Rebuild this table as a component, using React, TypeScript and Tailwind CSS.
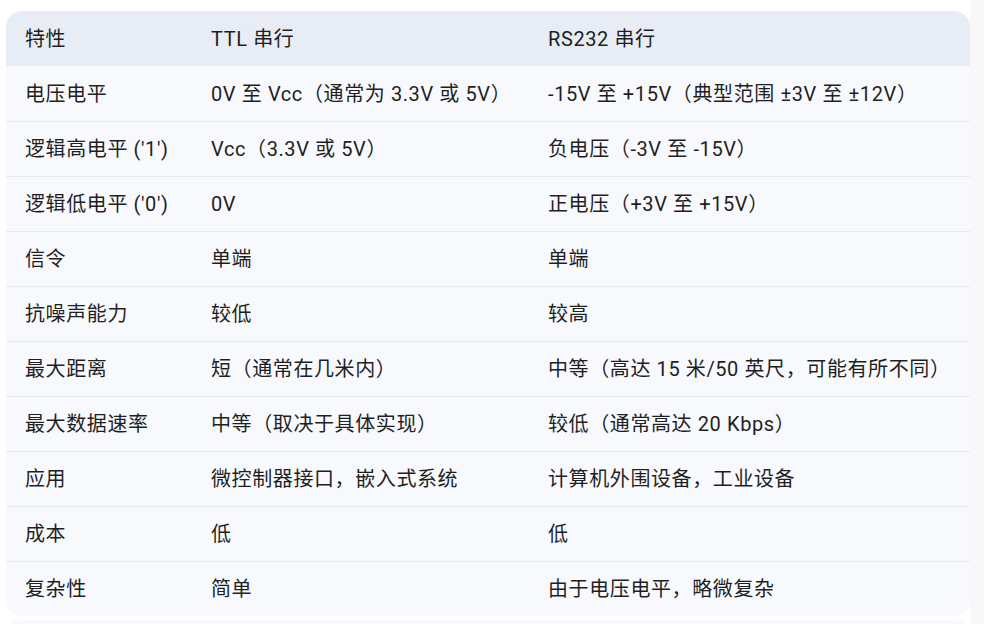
const rows: [string, string, string][] = [
  ['电压电平', '0V 至 Vcc（通常为 3.3V 或 5V）', '-15V 至 +15V（典型范围 ±3V 至 ±12V）'],
  ['逻辑高电平 (\'1\')', 'Vcc（3.3V 或 5V）', '负电压（-3V 至 -15V）'],
  ['逻辑低电平 (\'0\')', '0V', '正电压（+3V 至 +15V）'],
  ['信令', '单端', '单端'],
  ['抗噪声能力', '较低', '较高'],
  ['最大距离', '短（通常在几米内）', '中等（高达 15 米/50 英尺，可能有所不同）'],
  ['最大数据速率', '中等（取决于具体实现）', '较低（通常高达 20 Kbps）'],
  ['应用', '微控制器接口，嵌入式系统', '计算机外围设备，工业设备'],
  ['成本', '低', '低'],
  ['复杂性', '简单', '由于电压电平，略微复杂'],
];

const font = { fontFamily: 'Roboto, "Noto Sans CJK SC", sans-serif' };

export default function App() {
  return (
    <div
      className="flex h-[624px] w-[984px] overflow-hidden bg-white text-[#1f1f1f] tracking-[0.6px]"
      style={font}
    >
      <div className="flex w-[970px] shrink-0 flex-col pl-[6px] pt-[11px]">
        <div className="shrink-0 overflow-hidden rounded-2xl bg-[#f8f9fd]">
          <div className="grid h-[55px] grid-cols-[186px_337px_1fr] items-center bg-[#e8ecf4] text-[20px]">
            <div className="pl-[19px]">特性</div>
            <div className="pl-[19px]">TTL 串行</div>
            <div className="pl-[19px]">RS232 串行</div>
          </div>
          {rows.map((r, i) => (
            <div
              key={r[0]}
              className={`grid h-[55px] grid-cols-[186px_337px_1fr] items-center text-[20px] ${i > 0 ? 'border-t border-[#e6e9ef]' : ''}`}
            >
              <div className="whitespace-nowrap pl-[19px]">{r[0]}</div>
              <div className="whitespace-nowrap pl-[19px]">{r[1]}</div>
              <div className="whitespace-nowrap pl-[19px]">{r[2]}</div>
            </div>
          ))}
        </div>
        <div className="mt-[4px] h-[20px] shrink-0 rounded-t-2xl bg-[#f8f9fb]" />
      </div>
      <div className="ml-auto w-[14px] bg-[#f8f8f8]" />
    </div>
  );
}
